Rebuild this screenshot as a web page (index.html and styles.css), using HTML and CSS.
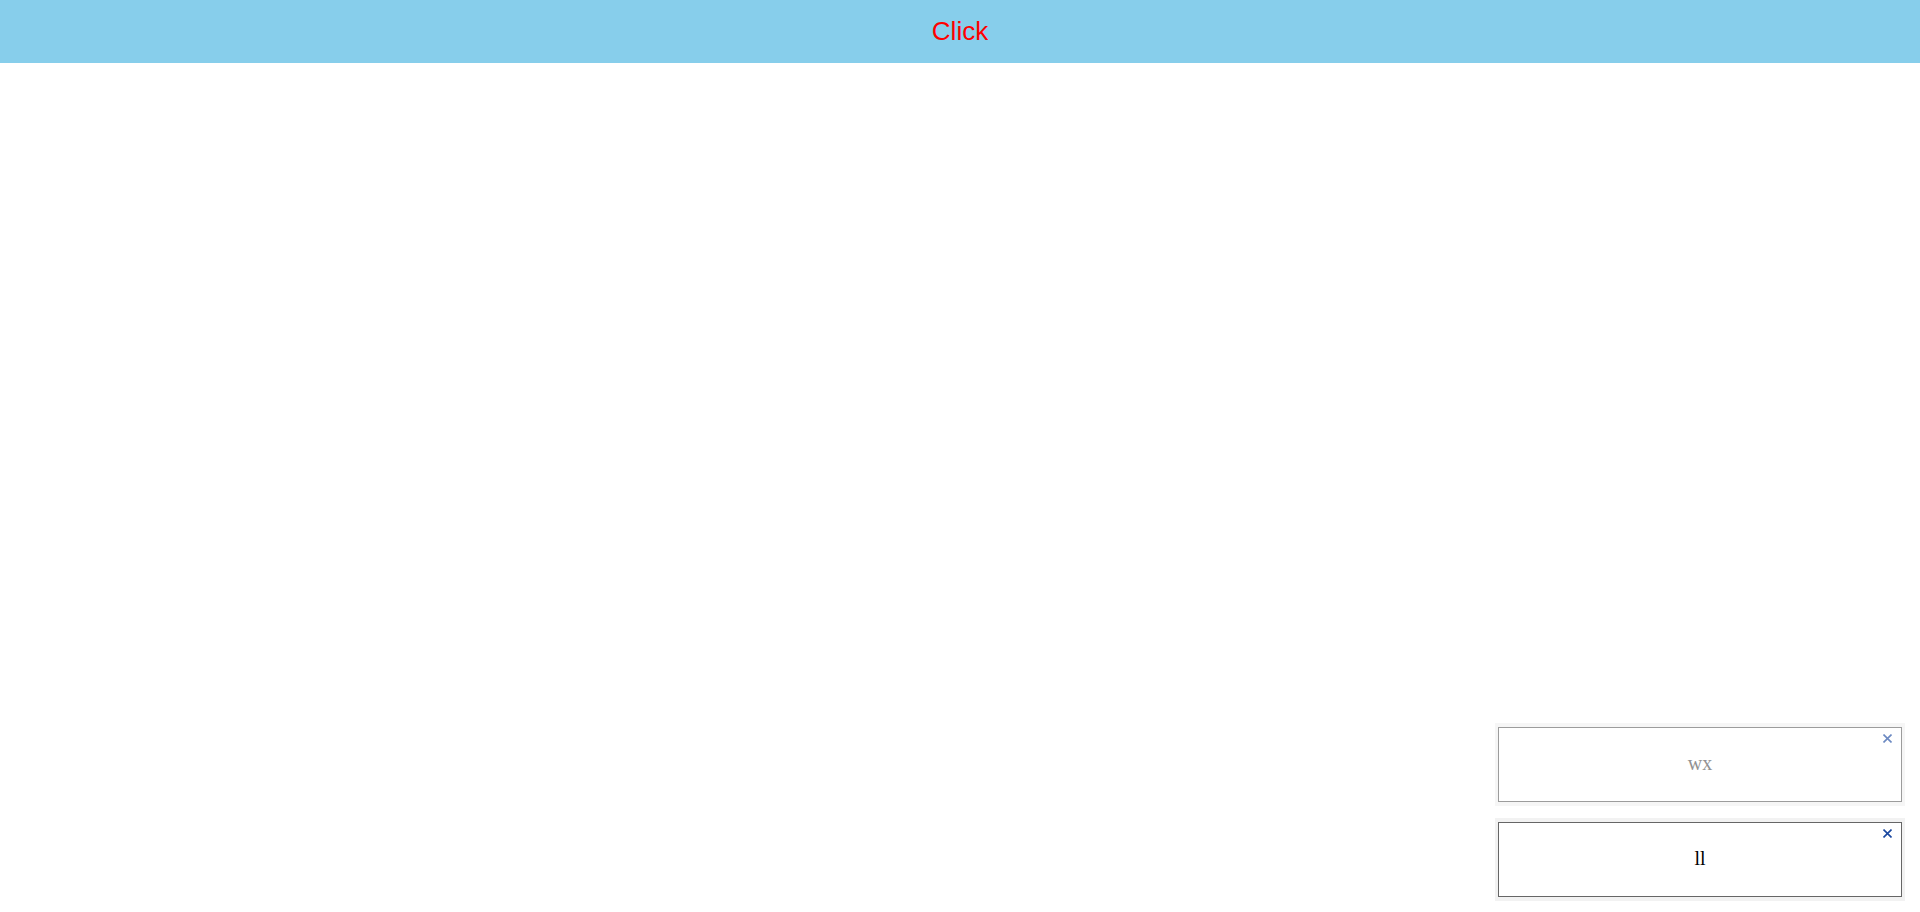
FILE: index.html
```html
<!DOCTYPE html>
<html lang="en">
<head>
<meta charset="utf-8">
<title>Notifications</title>
<link rel="stylesheet" href="styles.css">
</head>
<body>
<button class="trigger" type="button">Click</button>
<section class="notices" aria-label="Notifications">
  <div class="notice fading">
    <p class="message">wx</p>
    <button class="close" type="button" aria-label="Close"><svg viewBox="0 0 9 9" width="9" height="9"><path d="M.5 .5L8.500 8.500M8.500 .5L.5 8.500"/></svg></button>
  </div>
  <div class="notice">
    <p class="message">ll</p>
    <button class="close" type="button" aria-label="Close"><svg viewBox="0 0 9 9" width="9" height="9"><path d="M.5 .5L8.500 8.500M8.500 .5L.5 8.500"/></svg></button>
  </div>
</section>
</body>
</html>
```
FILE: styles.css
```css
* { box-sizing: border-box; }
body {
  margin: 0;
  min-height: 100vh;
  display: flex;
  flex-direction: column;
  justify-content: space-between;
  background: #fff;
  font-family: "Liberation Serif", "Times New Roman", serif;
}
.trigger {
  width: 100%;
  padding: 16px;
  border: 0;
  background: #87ceeb;
  color: #f00;
  font: 26px/31px "Liberation Sans", Arial, sans-serif;
}
.notices {
  align-self: flex-end;
  width: 410px;
  margin: 0 15px 11px 0;
  display: flex;
  flex-direction: column;
  gap: 12px;
}
.notice {
  position: relative;
  padding: 4px 3px;
  background: #f2f2f2;
  text-align: center;
}
.fading { opacity: 0.64; }
.message {
  margin: 0;
  padding: 24px 16px 27px;
  border: 1px solid #666;
  background: #fff;
  font-size: 20px;
  line-height: 22px;
}
.fading .message { color: #555; }
.close {
  position: absolute;
  top: 11px;
  right: 13px;
  display: flex;
  padding: 0;
  border: 0;
  background: none;
}
.close path { fill: none; stroke: #1a48a0; stroke-width: 1.6; }
```
